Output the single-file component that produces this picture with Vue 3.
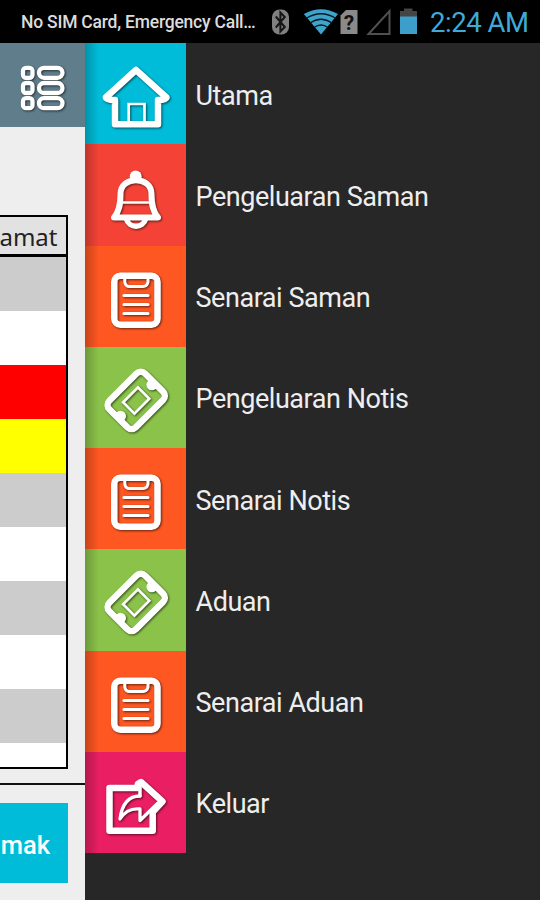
<template>
  <div class="screen">
    <header class="status-bar">
      <span class="carrier">No SIM Card, Emergency Call…</span>
      <svg class="status-icons" width="150" height="43" viewBox="270 0 150 43">
        <rect x="272" y="9.5" width="17" height="25" rx="7.5" fill="#808080" />
        <path d="M275.8 16.5l9 10.5-4.4 4.5V12.5l4.4 4.5-9 10.5" fill="none" stroke="#151515" stroke-width="2" />
        <path d="M303.8 14Q321 4.500 338 14L321 34.500Z" fill="#3fa4cc" />
        <g fill="none" stroke="#061920" stroke-width="1.300">
          <path d="M306 18.500Q321 9 336 18.500" />
          <path d="M310 23Q321 15.500 332 23" />
          <path d="M314 27.500Q321 22.500 328 27.500" />
        </g>
        <path d="M346 10h11.500v24H340.500V15.500Z" fill="#8a8a8a" />
        <text x="349" y="30" text-anchor="middle" class="sim-mark">?</text>
        <path d="M389.500 11V34H368.500Z" fill="none" stroke="#505050" stroke-width="2" />
        <path d="M404 8.500h8.500V11h4.500v6h-17v-6h4Z" fill="#454545" />
        <rect x="400" y="16.500" width="17" height="17.500" fill="#3b9fc9" />
      </svg>
      <span class="clock">2:24 AM</span>
    </header>

    <div class="body">
      <main class="page">
        <div class="toolbar">
          <svg width="48" height="50" viewBox="0 0 48 50" class="icon">
            <g v-for="y in [4.8, 20, 35.2]" :key="y">
              <rect x="4" :y="y" width="9.500" height="10" rx="3" stroke-width="4.300" />
              <rect x="20" :y="y" width="23.500" height="10" rx="5" stroke-width="4.300" />
            </g>
          </svg>
        </div>
        <div class="table">
          <div class="table-head">amat</div>
          <div v-for="(color, i) in rows" :key="i" class="row" :class="color"></div>
        </div>
        <div class="footer">
          <button class="save">mak</button>
        </div>
      </main>

      <nav class="drawer">
        <div v-for="item in items" :key="item.label" class="item">
          <div class="tile" :class="item.color">
            <svg viewBox="0 0 101 101" class="icon">
              <g v-if="item.icon === 'home'">
                <path d="M51 27L81.500 54.500Q81 57 73 57V81.300H30V57Q21 57 20.800 54.500Z" stroke-width="6.500" />
                <path d="M43.700 80V61H59.500V80" stroke-width="2.700" stroke-linejoin="miter" />
              </g>
              <g v-else-if="item.icon === 'bell'">
                <circle cx="50.700" cy="32.500" r="6" class="solid" />
                <path d="M29 73.500C34.500 67 35.500 60 35.500 50C35.500 31.500 66.500 31.500 66.500 50C66.500 60 67.500 67 73 73.500Z" stroke-width="6" />
                <path d="M36 58.500H66" stroke-width="2.500" />
                <path d="M41.500 75C43.500 84.500 58.500 84.500 60.500 75" stroke-width="5.500" />
              </g>
              <g v-else-if="item.icon === 'list'">
                <rect x="29.300" y="29.800" width="43.200" height="49" rx="6" stroke-width="6.500" />
                <path d="M39.800 32V36Q40.500 40.500 44.500 40.500H58Q62 40.500 63 36V32" stroke-width="3" />
                <path d="M39 49.500H63M39 58.500H63M39 67.500H63" stroke-width="3.200" />
              </g>
              <g v-else-if="item.icon === 'ticket'">
                <g transform="rotate(-45 51.200 53.500)">
                  <rect x="26" y="34.700" width="50.500" height="37.500" rx="6" stroke-width="6.500" />
                  <circle cx="29" cy="53.500" r="5.500" class="solid" />
                  <circle cx="73.400" cy="53.500" r="5.500" class="solid" />
                  <rect x="40.700" y="45.500" width="21" height="16" stroke-width="2.700" stroke-linejoin="miter" />
                </g>
              </g>
              <g v-else>
                <path d="M53 36H24.500V78.800H67.700V60L77.500 49.500L56 30L52.800 32V36" stroke-width="6.500" />
                <path d="M55 44C43 44 37 52 35 67C40 59 46 56 55 57V68.500L73 51" stroke-width="3.300" />
                <path d="M55 44V35" stroke-width="3.500" />
              </g>
            </svg>
          </div>
          <span class="label">{{ item.label }}</span>
        </div>
      </nav>
    </div>
  </div>
</template>

<script setup>
const rows = ['gray', 'white', 'red', 'yellow', 'gray', 'white', 'gray', 'white', 'gray', 'white']

const items = [
  { label: 'Utama', icon: 'home', color: 'cyan' },
  { label: 'Pengeluaran Saman', icon: 'bell', color: 'coral' },
  { label: 'Senarai Saman', icon: 'list', color: 'orange' },
  { label: 'Pengeluaran Notis', icon: 'ticket', color: 'green' },
  { label: 'Senarai Notis', icon: 'list', color: 'orange' },
  { label: 'Aduan', icon: 'ticket', color: 'green' },
  { label: 'Senarai Aduan', icon: 'list', color: 'orange' },
  { label: 'Keluar', icon: 'share', color: 'pink' }
]
</script>

<style>
body {
  margin: 0;
  background: #272727;
}
</style>

<style scoped>
.screen {
  display: flex;
  flex-direction: column;
  width: 540px;
  height: 900px;
  overflow: hidden;
  background: #272727;
  font-family: Roboto, "Liberation Sans", sans-serif;
}

.status-bar {
  display: flex;
  align-items: center;
  flex: none;
  height: 43px;
  background: #000;
}

.carrier {
  width: 249px;
  padding-left: 21px;
  color: #dcdcdc;
  font-size: 17.500px;
  font-weight: 500;
  letter-spacing: -0.220px;
  white-space: nowrap;
}

.status-icons {
  flex: none;
}

.sim-mark {
  font: bold 21px Roboto, sans-serif;
  fill: #111;
}

.clock {
  padding-left: 10px;
  padding-top: 2px;
  color: #3faad8;
  font-size: 27.500px;
  letter-spacing: -0.450px;
  white-space: nowrap;
}

.body {
  display: flex;
  flex: 1;
  min-height: 0;
}

.page {
  display: flex;
  flex-direction: column;
  width: 85px;
  background: #eee;
}

.toolbar {
  box-sizing: border-box;
  flex: none;
  height: 84px;
  padding: 20px 0 0 19px;
  background: #607d8b;
}

.icon {
  display: block;
  fill: none;
  stroke: #fff;
  stroke-linejoin: round;
  stroke-linecap: round;
  filter: drop-shadow(1.5px 1.5px 0.8px rgba(0, 0, 0, 0.6));
}

.solid {
  fill: #fff;
  stroke: none;
}

.table {
  box-sizing: border-box;
  width: 67.500px;
  height: 554.500px;
  flex: none;
  margin-top: 87.500px;
  overflow: hidden;
  border: solid #000;
  border-width: 2.500px 2.500px 2.500px 0;
}

.table-head {
  box-sizing: border-box;
  height: 40.500px;
  border-bottom: 3px solid #000;
  padding-right: 8px;
  background: #e2e2e2;
  color: #222;
  font: 24px/39px "Noto Sans", sans-serif;
  text-align: right;
  direction: rtl;
}

.row {
  height: 54px;
}

.gray {
  background: #ccc;
}

.white {
  background: #fff;
}

.red {
  background: #f00;
}

.yellow {
  background: #ff0;
}

.footer {
  flex: 1;
  margin-top: 14px;
  padding-top: 18px;
  border-top: 2px solid #111;
}

.save {
  display: block;
  width: 68px;
  height: 80px;
  padding: 3px 0 0;
  border: 0;
  background: #00bcd9;
  color: #fff;
  font: 500 25.500px Roboto, sans-serif;
  text-indent: -17px;
}

.drawer {
  flex: 1;
}

.item {
  display: flex;
  align-items: center;
  height: 101.250px;
}

.tile {
  width: 101px;
  height: 101.250px;
  /* shadow cast by the page on the left edge */
  background-image: linear-gradient(90deg, rgba(0, 0, 0, 0.22), transparent 14px);
}

.cyan {
  background-color: #00bcd9;
}

.coral {
  background-color: #f44336;
}

.orange {
  background-color: #ff5722;
}

.green {
  background-color: #8bc34a;
}

.pink {
  background-color: #e91e63;
}

.label {
  padding-left: 9.500px;
  padding-top: 4px;
  color: #eee;
  font-size: 27px;
  letter-spacing: -0.450px;
  white-space: nowrap;
}
</style>
